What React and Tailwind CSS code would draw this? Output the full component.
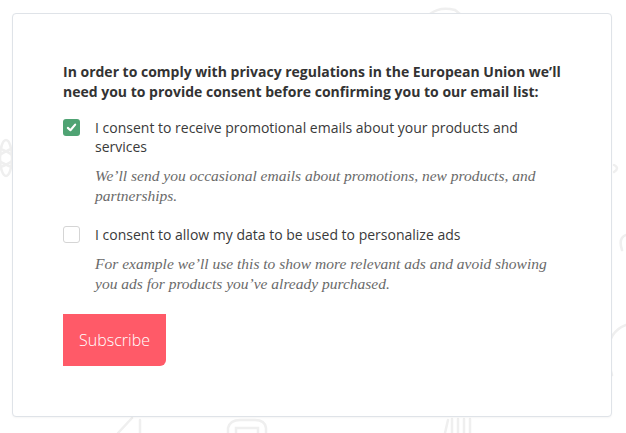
import React from "react";

function Doodles() {
  return (
    <svg className="absolute inset-0 w-full h-full" width="626" height="433" viewBox="0 0 626 433" fill="none" stroke="#efefef" strokeWidth="2.5" strokeLinecap="round">
      <ellipse cx="6" cy="158" rx="6" ry="18" />
      <ellipse cx="6" cy="158" rx="18" ry="6" transform="rotate(30 6 158)" />
      <ellipse cx="6" cy="158" rx="18" ry="6" transform="rotate(-30 6 158)" />
      <path d="M430 14 Q440 6 455 10 L460 14" />
      <path d="M626 235 Q618 238 622 250" />
      <path d="M626 325 Q600 335 612 375" />
      <path d="M614 165 Q620 168 614 172" />
      <path d="M118 433 L132 418" />
      <path d="M140 433 L140 420" />
      <path d="M228 433 L228 428 Q230 420 240 420 L255 420 Q265 420 266 428 L266 433" />
      <path d="M236 433 L236 428 L258 428 L258 433" />
      <path d="M445 433 L448 420 M452 433 L452 419 M458 433 L458 419 M464 433 L464 419 M470 433 L470 419" />
    </svg>
  );
}

function Checkbox({ checked }) {
  if (checked) {
    return (
      <span className="flex items-center justify-center w-[17px] h-[17px] rounded-[3px] bg-[#4fa373] shrink-0">
        <svg width="11" height="11" viewBox="0 0 12 12" fill="none" stroke="white" strokeWidth="2.3" strokeLinecap="round" strokeLinejoin="round">
          <path d="M2 6.4 L4.8 9 L10 2.8" />
        </svg>
      </span>
    );
  }
  return <span className="block w-[17px] h-[17px] rounded-[3px] border border-[#d5d5d5] bg-white shrink-0" />;
}

function Option({ checked, label, desc }) {
  return (
    <div>
      <div className="flex items-start gap-[15px]">
        <div className="pt-[1px]"><Checkbox checked={checked} /></div>
        <div className="text-[14px] leading-[19px] text-[#3a3a3a] pr-[10px]">{label}</div>
      </div>
      <p className="mt-[10px] ml-[32px] text-[15.5px] leading-[20px] italic text-[#6a6a6a] pr-[10px] font-['Georgia','Liberation_Serif',serif]">
        {desc}
      </p>
    </div>
  );
}

export default function App() {
  return (
    <div className="relative min-h-[433px] w-[626px] bg-white overflow-hidden font-['Open_Sans',sans-serif]">
      <Doodles />
      <div className="relative pt-[13px] pl-[12px]">
        <div className="w-[600px] h-[404px] bg-white border border-[#dfe3e8] rounded-[4px] shadow-[0_1px_2px_rgba(0,0,0,0.04)] pt-[48px] pl-[50px] pr-[40px]">
          <p className="text-[14px] leading-[20px] font-bold text-[#333333]">
            In order to comply with privacy regulations in the European Union we’ll need you to provide consent before confirming you to our email list:
          </p>
          <div className="mt-[16px] flex flex-col gap-[19px]">
            <Option
              checked
              label="I consent to receive promotional emails about your products and services"
              desc="We’ll send you occasional emails about promotions, new products, and partnerships."
            />
            <Option
              label="I consent to allow my data to be used to personalize ads"
              desc="For example we’ll use this to show more relevant ads and avoid showing you ads for products you’ve already purchased."
            />
          </div>
          <button className="mt-[20px] w-[103px] h-[52px] bg-[#ff5a68] rounded-br-[6px] text-white text-[16px] font-light font-['Open_Sans',sans-serif]">
            Subscribe
          </button>
        </div>
      </div>
    </div>
  );
}
